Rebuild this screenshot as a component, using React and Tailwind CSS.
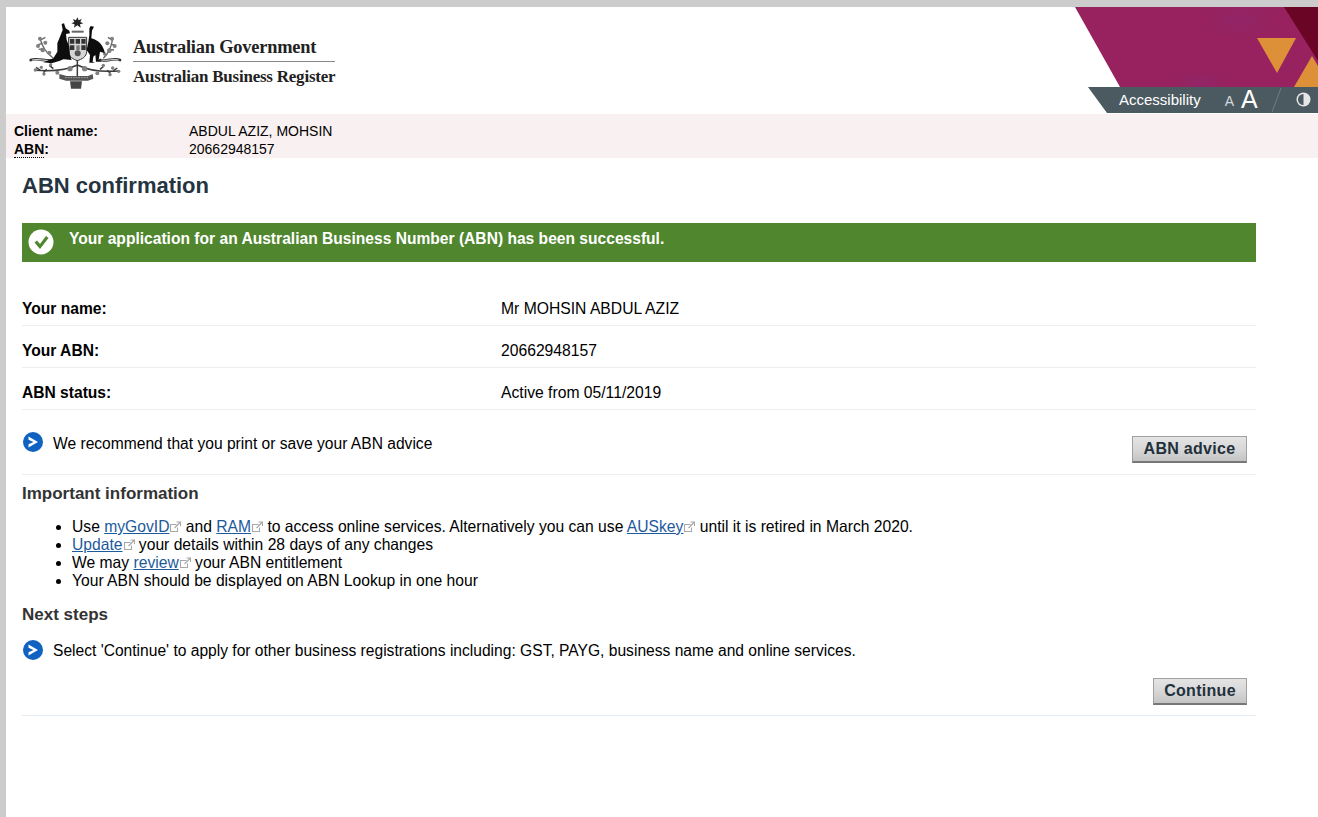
const font = "[font-family:'Liberation_Sans',Arial,sans-serif]";

function CoatOfArms() {
  return (
    <svg width="110" height="85" viewBox="0 0 330 255" className="block">
      <defs>
        <filter id="soft"><feGaussianBlur stdDeviation="1.300" /></filter>
      </defs>
      <g filter="url(#soft)">
        {/* star and crest */}
        <path d="M172 22l4 9 9-4-4 9 9 4-10 3 2 10-10-7-10 7 2-10-10-3 9-4-4-9 9 4z" fill="#222" />
        <rect x="155" y="62" width="36" height="6" fill="#666" />
        {/* upper foliage */}
        <g fill="none" stroke="#666" strokeWidth="4">
          <path d="M100 145c-20-15-35-35-40-62M68 100l-14 4M74 116l-18 2M62 90l14-8" />
          <path d="M250 145c15-15 25-35 28-60M272 102l12 4M264 118l18 2M276 90l-12-8" />
        </g>
        <g fill="#808080">
          <circle cx="60" cy="86" r="6" /><circle cx="76" cy="98" r="6" /><circle cx="54" cy="108" r="6" /><circle cx="68" cy="120" r="7" /><circle cx="88" cy="128" r="6" />
          <circle cx="276" cy="86" r="6" /><circle cx="262" cy="100" r="6" /><circle cx="284" cy="108" r="6" /><circle cx="268" cy="122" r="7" /><circle cx="254" cy="132" r="5" />
        </g>
        {/* wreath band */}
        <path d="M32 150c20-8 48 6 72 0M240 150c20 6 40-8 60 0" fill="none" stroke="#333" strokeWidth="8" strokeLinecap="round" />
        <path d="M36 150c18-5 44 5 64 0M244 150c18 4 36-5 52 0" fill="none" stroke="#ddd" strokeWidth="3" />
        {/* shield */}
        <path d="M146 82h54v43c0 15-15 23-28 27-12-4-26-12-26-27z" fill="#d5d5d5" stroke="#333" strokeWidth="3" />
        <path d="M150 87h13v14h-13zM167 87h13v14h-13zM184 87h13v14h-13zM150 106h13v14h-13zM184 106h13v14h-13z" fill="#333" />
        <path d="M169 106h10v14h-10z" fill="#777" />
        <circle cx="173" cy="130" r="9" fill="#555" />
        {/* kangaroo */}
        <path d="M125 42l7-2 5 15 11 7 2 8-12 2 2 18 8 20 2 25 5 15-25-2-10 4-25 8-25-3 30-12 12-20v-25l10-25 6-15z" fill="#111" />
        {/* emu */}
        <path d="M208 55l4-7 10 2-4 8-2 4-2 23c21 5 36 20 41 45l-15-5-4 25 9 5h-17l-2-20-6 5-2 15 7 3h-17l2-23-10-15 5-25 3-20z" fill="#111" />
        {/* lower branches */}
        <g fill="none" stroke="#3a3a3a" strokeWidth="4.500">
          <path d="M172 150v50M172 165c-30 15-70 20-125 16M172 165c30 15 70 22 124 18" />
          <path d="M100 176l-12-10M80 178l-10 10M60 180l-12-8M240 178l12-10M262 181l10 10M280 182l12-8" />
        </g>
        <g fill="#808080">
          <circle cx="46" cy="180" r="5" /><circle cx="64" cy="172" r="5" /><circle cx="72" cy="192" r="5" /><circle cx="92" cy="164" r="5" /><circle cx="112" cy="188" r="6" />
          <circle cx="296" cy="184" r="5" /><circle cx="278" cy="174" r="5" /><circle cx="270" cy="194" r="5" /><circle cx="250" cy="166" r="5" /><circle cx="232" cy="190" r="6" />
          <circle cx="150" cy="176" r="8" /><circle cx="194" cy="176" r="8" />
        </g>
        {/* motto scroll and base */}
        <path d="M118 192l22 6h64l14-6 2 14-16 6h-66l-20-6z" fill="#555" />
        <path d="M135 203h70" stroke="#ccc" strokeWidth="2" strokeDasharray="5 3" />
        <path d="M150 214h36l-3 22h-30z" fill="#444" />
      </g>
    </svg>
  );
}

function HeaderArt() {
  return (
    <svg width="243" height="107" viewBox="0 0 243 107" className="absolute top-0 right-0">
      <defs>
        <radialGradient id="tint">
          <stop offset="0" stopColor="#8c2a72" stopOpacity="0.45" />
          <stop offset="1" stopColor="#8c2a72" stopOpacity="0" />
        </radialGradient>
      </defs>
      <polygon points="0,0 243,0 243,80 45,80" fill="#97225f" />
      <ellipse cx="165" cy="13" rx="34" ry="22" fill="url(#tint)" />
      <ellipse cx="125" cy="76" rx="28" ry="12" fill="url(#tint)" />
      <polygon points="209,0 243,0 243,54" fill="#6b0526" />
      <polygon points="182,31 221,31 202,66" fill="#dd9038" />
      <polygon points="219,80 237,49 243,59 243,80" fill="#dd9038" />
    </svg>
  );
}

function AccessBar() {
  return (
    <div className="absolute bottom-px right-0 z-10 h-[26px] w-[230px] bg-[#4b5a61] [clip-path:polygon(0_0,100%_0,100%_100%,19px_100%)] text-white flex items-center">
      <span className="ml-[31px] mt-[-2px] text-[15px] leading-none">Accessibility</span>
      <span className="ml-[24px] text-[14px] leading-none text-[#d5d9db] mt-[2px]">A</span>
      <span className="ml-[7px] text-[25px] leading-none mt-[-2px]">A</span>
      <svg width="12" height="26" viewBox="0 0 12 26" className="ml-[12px]">
        <path d="M11 1L2 25" stroke="#6f7c82" strokeWidth="1" />
      </svg>
      <svg width="15" height="15" viewBox="0 0 15 15" className="ml-[14px] mt-[-2px]">
        <circle cx="7.500" cy="7.500" r="7" fill="#e6e6e6" />
        <path d="M7.500 2a5.500 5.500 0 0 0 0 11z" fill="#4b5a61" />
      </svg>
    </div>
  );
}

function ExtIcon() {
  return (
    <svg width="12" height="12" viewBox="0 0 12 12" className="inline-block align-[-1px]">
      <path d="M7.500 3.500H1.500v7h7V6.500" fill="none" stroke="#a8a8a8" strokeWidth="1.100" />
      <path d="M5.500 7L11 1.500M7.500 1h4v4" fill="none" stroke="#a8a8a8" strokeWidth="1.100" />
    </svg>
  );
}

function ExtLink({ children }) {
  return (
    <>
      <a href="#" className="text-[#1c5a9c] underline">{children}</a>
      <ExtIcon />
    </>
  );
}

function ArrowBullet() {
  return (
    <svg width="20" height="20" viewBox="0 0 20 20" className="shrink-0">
      <circle cx="10" cy="10" r="10" fill="#0f62c0" />
      <path d="M5.500 4.500l9.500 5.500-9.500 5.500v-3.200l5-2.300-5-2.300z" fill="#fff" />
    </svg>
  );
}

function InfoRow({ label, value }) {
  return (
    <div className="h-[42px] flex items-center border-b border-[#eeeeee] pt-[9px]">
      <span className="w-[479px] font-bold">{label}</span>
      <span className="text-[15.7px]">{value}</span>
    </div>
  );
}

function GreyButton({ width, children }) {
  return (
    <button className={`${width} h-[27px] border border-[#a0a0a0] border-b-2 border-b-[#777] bg-gradient-to-b from-[#e4e4e4] via-[#d8d8d8] to-[#c4c4c4] text-[16px] font-bold text-[#22303c] tracking-[0.3px] leading-none`}>
      {children}
    </button>
  );
}

export default function App() {
  return (
    <div className={`${font} min-h-[817px] bg-white border-l-[6px] border-t-[7px] border-[#cccccc] text-[15.6px] leading-[18px] text-black overflow-hidden`}>
      <header className="relative h-[107px] bg-white flex">
        <div className="pl-[14px] pt-[3px]">
          <CoatOfArms />
        </div>
        <div className="ml-[3px] pt-[29px] w-[202px] font-['Liberation_Serif',serif] font-bold text-[#222]">
          <div className="text-[18.4px] leading-[22px] tracking-[-0.2px] border-b border-[#888] pb-[3px] whitespace-nowrap">Australian Government</div>
          <div className="text-[16.95px] leading-[22px] tracking-[-0.2px] pt-[4px] whitespace-nowrap">Australian Business Register</div>
        </div>
        <HeaderArt />
        <AccessBar />
      </header>

      <div className="h-[44px] bg-[#f9f1f1] pl-[8px] pt-[8px] text-[14px] leading-[18px]">
        <div className="flex">
          <span className="w-[175px] font-bold">Client name:</span>
          <span>ABDUL AZIZ, MOHSIN</span>
        </div>
        <div className="flex">
          <span className="w-[175px] font-bold">
            <abbr className="no-underline border-b border-dotted border-black">ABN</abbr>:
          </span>
          <span>20662948157</span>
        </div>
      </div>

      <main className="w-[1234px] ml-[16px]">
        <h1 className="pt-[15px] text-[22px] leading-[25px] font-bold text-[#25343f]">ABN confirmation</h1>

        <div className="mt-[25px] h-[39px] bg-[#4f862e] flex items-start pl-[6px] pt-[6px] text-white font-bold">
          <svg width="26" height="26" viewBox="0 0 26 26" className="shrink-0">
            <circle cx="13" cy="13" r="12.500" fill="#fff" />
            <path d="M6.500 13.500l2.500-2 3 3.500 6-8 2.500 2-8.500 11z" fill="#4f862e" />
          </svg>
          <span className="ml-[15px] mt-[1px]">Your application for an Australian Business Number (ABN) has been successful.</span>
        </div>

        <div className="mt-[22px]">
          <InfoRow label="Your name:" value="Mr MOHSIN ABDUL AZIZ" />
          <InfoRow label="Your ABN:" value="20662948157" />
          <InfoRow label="ABN status:" value="Active from 05/11/2019" />
        </div>

        <div className="h-[65px] border-b border-[#eeeeee] flex items-start pt-[22px] pl-px">
          <ArrowBullet />
          <span className="ml-[10px] mt-[3px]">We recommend that you print or save your ABN advice</span>
          <div className="ml-auto mr-[9px] mt-[4px]">
            <GreyButton width="w-[115px]">ABN advice</GreyButton>
          </div>
        </div>

        <h2 className="mt-[10px] text-[17px] font-bold text-[#333]">Important information</h2>

        <ul className="mt-[15px] pl-[50px] list-disc text-[15.66px]">
          <li>Use <ExtLink>myGovID</ExtLink> and <ExtLink>RAM</ExtLink> to access online services. Alternatively you can use <ExtLink>AUSkey</ExtLink> until it is retired in March 2020.</li>
          <li><ExtLink>Update</ExtLink> your details within 28 days of any changes</li>
          <li>We may <ExtLink>review</ExtLink> your ABN entitlement</li>
          <li>Your ABN should be displayed on ABN Lookup in one hour</li>
        </ul>

        <h2 className="mt-[16px] text-[17px] font-bold text-[#333]">Next steps</h2>

        <div className="mt-[16px] flex items-start pl-px">
          <ArrowBullet />
          <span className="ml-[10px] mt-[2px]">Select 'Continue' to apply for other business registrations including: GST, PAYG, business name and online services.</span>
        </div>

        <div className="h-[56px] border-b border-[#e6edf2] flex justify-end items-start pt-[18px] pr-[9px]">
          <GreyButton width="w-[94px]">Continue</GreyButton>
        </div>
      </main>
    </div>
  );
}
